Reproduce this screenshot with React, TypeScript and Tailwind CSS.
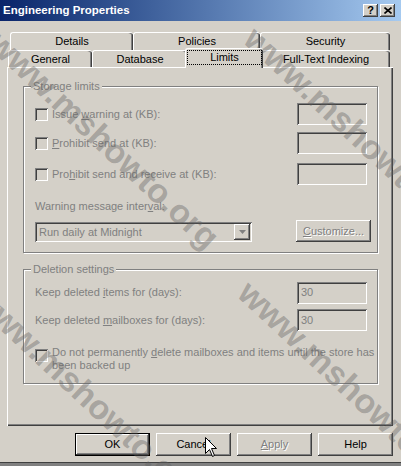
const raised =
  "shadow-[inset_-1px_-1px_#404040,inset_1px_1px_#ffffff,inset_-2px_-2px_#808080,inset_2px_2px_#d4d0c8]";
const sunken =
  "shadow-[inset_1px_1px_#808080,inset_-1px_-1px_#ffffff,inset_2px_2px_#404040,inset_-2px_-2px_#d4d0c8]";
const etched = "border border-[#808080] shadow-[inset_1px_1px_#ffffff,1px_1px_#ffffff]";

const rowOneTabs = [
  { label: "Details", width: "w-[123px]" },
  { label: "Policies", width: "w-[127px]" },
  { label: "Security", width: "w-[130px]" },
];

const watermarks = [
  "left-[-6px] top-[20px]",
  "left-[250px] top-[16px]",
  "left-[-22px] top-[276px]",
  "left-[244px] top-[270px]",
];

function Tab({ label, width }: { label: string; width: string }) {
  return (
    <div
      className={`${width} flex h-full items-center justify-center rounded-t-[3px] border-l border-t border-white shadow-[inset_-1px_0_#404040,inset_-2px_0_#808080]`}
    >
      {label}
    </div>
  );
}

function Check() {
  return <span className={`block h-[13px] w-[13px] shrink-0 bg-[#d4d0c8] ${sunken}`} />;
}

function Field({ value, className = "" }: { value?: string; className?: string }) {
  return (
    <div className={`flex h-[22px] w-[70px] items-center bg-[#d4d0c8] pl-[4px] text-[#808080] ${sunken} ${className}`}>
      {value}
    </div>
  );
}

function Button({ label, disabled, isDefault }: { label: React.ReactNode; disabled?: boolean; isDefault?: boolean }) {
  const face = (
    <div
      className={`flex h-full w-full items-center justify-center ${raised} ${
        disabled ? "text-[#808080] [text-shadow:1px_1px_0_#ffffff]" : "text-black"
      }`}
    >
      {label}
    </div>
  );
  if (isDefault) {
    return <div className="h-[23px] w-[75px] border border-black">{face}</div>;
  }
  return <div className="h-[23px] w-[75px]">{face}</div>;
}

export default function App() {
  return (
    <div className="relative h-[466px] w-[401px] overflow-hidden bg-[#d4d0c8] font-['Liberation_Sans',Arial,sans-serif] text-[11px] leading-[13px] text-black">
      {/* title bar */}
      <div className="flex h-[21px] items-center bg-gradient-to-r from-[#0a246a] to-[#a6caf0] pl-[3px] pr-[6px]">
        <span className="flex-1 text-[11.5px] font-bold text-white">Engineering Properties</span>
        <div className="flex gap-[2px]">
          <div className={`flex h-[13px] w-[15px] items-center justify-center bg-[#d4d0c8] text-[11px] font-bold leading-none ${raised}`}>
            ?
          </div>
          <div className={`flex h-[13px] w-[15px] items-center justify-center bg-[#d4d0c8] ${raised}`}>
            <svg width="8" height="7" viewBox="0 0 8 7">
              <path d="M0.5 0.5 L7.5 6.5 M7.5 0.5 L0.5 6.5" stroke="#000" strokeWidth="1.6" />
            </svg>
          </div>
        </div>
      </div>

      <div className="px-[7px] pt-[11px]">
        {/* tabs */}
        <div className="ml-[3px] flex h-[18px]">
          {rowOneTabs.map((tab) => (
            <Tab key={tab.label} {...tab} />
          ))}
        </div>
        <div className="ml-[1px] flex h-[17px] items-end">
          <Tab label="General" width="w-[84px]" />
          <Tab label="Database" width="w-[95px]" />
          <div className="relative z-10 -mx-[2px] -mb-[1px] -mt-[2px] flex h-[20px] w-[78px] items-stretch rounded-t-[3px] border-l border-t border-white bg-[#d4d0c8] px-[1px] pb-[3px] pt-[1px] shadow-[inset_-1px_0_#404040,inset_-2px_0_#808080]">
            <div className="flex flex-1 items-center justify-center border border-dotted border-black">Limits</div>
          </div>
          <Tab label="Full-Text Indexing" width="w-[129px]" />
        </div>

        {/* panel */}
        <div className="h-[359px] w-[386px] border-l border-t border-white pl-[15px] pt-[18px] text-[#808080] shadow-[inset_-1px_-1px_#404040,inset_-2px_-2px_#808080]">
          <div className={`relative h-[167px] w-[355px] ${etched}`}>
            <span className="absolute -top-[7px] left-[7px] bg-[#d4d0c8] px-[2px]">Storage limits</span>
            <div className="mt-[16px] flex h-[22px] items-center pl-[11px] pr-[10px]">
              <Check />
              <span className="ml-[4px] flex-1">
                Issue <u>w</u>arning at (KB):
              </span>
              <Field />
            </div>
            <div className="mt-[7px] flex h-[22px] items-center pl-[11px] pr-[10px]">
              <Check />
              <span className="ml-[4px] flex-1">
                <u>P</u>rohibit send at (KB):
              </span>
              <Field />
            </div>
            <div className="mt-[9px] flex h-[22px] items-center pl-[11px] pr-[10px]">
              <Check />
              <span className="ml-[4px] flex-1">
                Pro<u>h</u>ibit send and receive at (KB):
              </span>
              <Field />
            </div>
            <div className="mt-[15px] pl-[11px]">
              Warning message inter<u>v</u>al:
            </div>
            <div className="mt-[7px] flex h-[22px] items-end pl-[11px] pr-[6px]">
              <div className={`flex h-[20px] w-[217px] items-center bg-[#d4d0c8] pl-[4px] pr-[2px] ${sunken}`}>
                <span className="flex-1">Run daily at Midnight</span>
                <div className={`flex h-[16px] w-[16px] items-center justify-center ${raised}`}>
                  <svg width="7" height="4" viewBox="0 0 7 4">
                    <path d="M0 0 H7 L3.5 4 Z" fill="#808080" />
                  </svg>
                </div>
              </div>
              <div className="ml-auto">
                <div className="h-[22px] w-[75px]">
                  <div className={`flex h-full w-full items-center justify-center [text-shadow:1px_1px_0_#ffffff] ${raised}`}>
                    <span>
                      <u>C</u>ustomize...
                    </span>
                  </div>
                </div>
              </div>
            </div>
          </div>

          <div className={`relative mt-[16px] h-[115px] w-[355px] ${etched}`}>
            <span className="absolute -top-[7px] left-[7px] bg-[#d4d0c8] px-[2px]">Deletion settings</span>
            <div className="mt-[12px] flex h-[21px] items-center pl-[11px] pr-[10px]">
              <span className="flex-1">
                Keep deleted <u>i</u>tems for (days):
              </span>
              <Field value="30" className="h-[21px]" />
            </div>
            <div className="mt-[6px] flex h-[22px] items-center pl-[11px] pr-[10px]">
              <span className="flex-1">
                Keep deleted <u>m</u>ailboxes for (days):
              </span>
              <Field value="30" />
            </div>
            <div className="mt-[15px] flex items-start pl-[11px]">
              <div className="mt-[3px]">
                <Check />
              </div>
              <span className="ml-[4px] flex-1 whitespace-nowrap">
                Do not permanently <u>d</u>elete mailboxes and items until the store has
                <br />
                been backed up
              </span>
            </div>
          </div>
        </div>
      </div>

      {/* buttons */}
      <div className="mt-[7px] flex justify-end gap-[6px] pr-[8px]">
        <Button label="OK" isDefault />
        <Button label="Cancel" />
        <Button
          label={
            <span>
              <u>A</u>pply
            </span>
          }
          disabled
        />
        <Button label="Help" />
      </div>
      <div className="absolute bottom-0 left-0 h-[4px] w-full border-t border-[#404040] bg-[#808080]" />

      {/* mouse pointer */}
      <svg className="absolute left-[205px] top-[437px]" width="13" height="21" viewBox="0 0 13 21">
        <path
          d="M0.5 0.5 L0.5 16.5 L4.5 12.5 L7.5 19.5 L9.5 18.5 L6.5 11.5 L11.5 11.5 Z"
          fill="#ffffff"
          stroke="#000000"
          strokeLinejoin="miter"
        />
      </svg>

      {/* watermark */}
      {watermarks.map((pos) => (
        <span
          key={pos}
          className={`pointer-events-none absolute ${pos} origin-[0_50%] rotate-[43deg] whitespace-nowrap font-['Liberation_Sans',Arial,sans-serif] text-[34px] font-bold leading-[34px] text-[#5f5f5f]/40`}
        >
          www.mshowto.org
        </span>
      ))}
    </div>
  );
}
